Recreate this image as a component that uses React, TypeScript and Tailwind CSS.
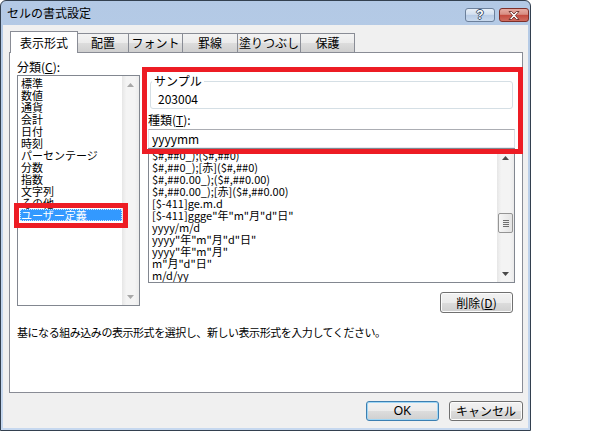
import React from "react";

const categories = [
  "標準",
  "数値",
  "通貨",
  "会計",
  "日付",
  "時刻",
  "パーセンテージ",
  "分数",
  "指数",
  "文字列",
  "その他",
  "ユーザー定義",
];

const formats = [
  '$#,##0_);($#,##0)',
  '$#,##0_);[赤]($#,##0)',
  '$#,##0.00_);($#,##0.00)',
  '$#,##0.00_);[赤]($#,##0.00)',
  '[$-411]ge.m.d',
  '[$-411]ggge"年"m"月"d"日"',
  'yyyy/m/d',
  'yyyy"年"m"月"d"日"',
  'yyyy"年"m"月"',
  'm"月"d"日"',
  'm/d/yy',
];

function Arrow({ up, color }: { up?: boolean; color: string }) {
  return (
    <div className="h-[17px] flex items-center justify-center shrink-0">
      <svg width="7" height="4" viewBox="0 0 7 4">
        {up ? <path d="M3.5 0L7 4H0z" fill={color} /> : <path d="M0 0h7L3.5 4z" fill={color} />}
      </svg>
    </div>
  );
}

function Track({ children }: { children: React.ReactNode }) {
  return (
    <div className="w-[17px] shrink-0 flex flex-col bg-[linear-gradient(90deg,#e6e6e6,#f4f4f4_25%,#f4f4f4_75%,#ebebeb)]">
      {children}
    </div>
  );
}

function Tab({ label, active, w }: { label: string; active?: boolean; w: string }) {
  if (active) {
    return (
      <div className={`${w} h-[22px] relative z-10 bg-white border border-b-0 border-[#898c95] flex items-center justify-center`}>
        {label}
      </div>
    );
  }
  return (
    <div
      className={`${w} h-[20px] border border-l-0 border-[#898c95] bg-[linear-gradient(#f3f3f3_0%,#ebebeb_50%,#dddddd_50%,#cfcfcf_100%)] flex items-center justify-center`}
    >
      {label}
    </div>
  );
}

function Button({ children, def, w }: { children: React.ReactNode; def?: boolean; w: string }) {
  return (
    <div
      className={`${w} h-[20px] rounded-[3px] border flex items-center justify-center bg-[linear-gradient(#f2f2f2_0%,#ebebeb_50%,#dddddd_50%,#cfcfcf_100%)] ${
        def ? "border-[#3c7fb1] shadow-[inset_0_0_0_1px_#9fd6f5]" : "border-[#707070] shadow-[inset_0_0_0_1px_#fcfcfc]"
      }`}
    >
      {children}
    </div>
  );
}

export default function App() {
  return (
    <div className="relative w-[600px] h-[431px] bg-white text-[12px] leading-[12px] text-black font-['Noto_Sans_CJK_JP','Liberation_Sans',sans-serif]">
      {/* window */}
      <div className="w-[531px] h-[431px] flex flex-col border border-[#33404f] rounded-t-[6px] bg-[linear-gradient(#b3c9e5,#c6d8ef)]">
        {/* title bar */}
        <div className="h-[24px] shrink-0 flex items-start">
          <div className="pl-[6px] pt-[6px] flex-1">セルの書式設定</div>
          <div className="mt-[7px] mr-[1px] flex gap-[4px]">
            <div className="w-[30px] h-[14px] rounded-[3px] border border-[#6c809b] bg-[linear-gradient(#e8eff8_0%,#d3e0f0_45%,#b7cbe5_50%,#c9daee_100%)] flex items-center justify-center">
              <span className="text-[12px] leading-[12px] font-bold text-white font-['Liberation_Sans',sans-serif] [text-shadow:1px_0_0_#3b4f6b,-1px_0_0_#3b4f6b,0_1px_0_#3b4f6b,0_-1px_0_#3b4f6b]">
                ?
              </span>
            </div>
            <div className="w-[30px] h-[14px] rounded-[3px] border border-[#7e302a] bg-[linear-gradient(#e6aba2_0%,#d88d82_45%,#c4493d_50%,#cf6c5f_100%)] flex items-center justify-center">
              <svg width="12" height="9" viewBox="0 0 12 9">
                <path
                  d="M1 0.5h2.6L6 3l2.4-2.5H11L7.4 4.5 11 8.5H8.4L6 6 3.6 8.5H1l3.6-4z"
                  fill="#fff"
                  stroke="#5a1f1a"
                  strokeWidth="0.8"
                />
              </svg>
            </div>
          </div>
        </div>

        {/* client */}
        <div className="flex-1 mx-[2px] mb-[2px] bg-[#f0f0f0] pl-[6px] pt-[6px] pb-[7px] flex flex-col">
          <div className="flex items-end h-[22px] pl-px">
            <Tab label="表示形式" active w="w-[68px]" />
            <Tab label="配置" w="w-[51px]" />
            <Tab label="フォント" w="w-[54px]" />
            <Tab label="罫線" w="w-[55px]" />
            <Tab label="塗りつぶし" w="w-[63px]" />
            <Tab label="保護" w="w-[54px]" />
          </div>

          {/* panel */}
          <div className="-mt-px w-[514px] h-[341px] border border-[#898c95] bg-white flex flex-col">
            <div className="flex">
              {/* left column */}
              <div className="ml-[7px] w-[123px] pt-[8px] flex flex-col">
                <div>
                  分類(<span className="underline">C</span>):
                </div>
                <div className="mt-[2px] h-[231px] border border-[#828790] flex">
                  <div className="flex-1 pt-px pl-[2px] text-[11px]">
                    {categories.map((c) => (
                      <div
                        key={c}
                        className={`h-[12px] pl-px whitespace-nowrap ${
                          c === "ユーザー定義" ? "bg-[#3399ff] text-white outline outline-dotted outline-[#cfe6ff] -outline-offset-1" : ""
                        }`}
                      >
                        {c}
                      </div>
                    ))}
                  </div>
                  <Track>
                    <Arrow up color="#a8a8a8" />
                    <div className="flex-1" />
                    <Arrow color="#a8a8a8" />
                  </Track>
                </div>
              </div>

              {/* right column */}
              <div className="ml-[8px] w-[367px] pt-[22px] flex flex-col">
                <fieldset className="mx-[2px] border border-[#d5dfe5] rounded-[3px] pl-[7px] pt-[6px] pb-[3px]">
                  <legend className="ml-[-6px] px-[2px]">サンプル</legend>
                  <div>203004</div>
                </fieldset>
                <div className="mt-[5px]">
                  種類(<span className="underline">T</span>):
                </div>
                <div className="mt-[3px] h-[19px] border border-[#abadb3] border-b-[#e3e9ef] border-r-[#dbdfe6] border-l-[#e2e3ea] flex items-center pl-[3px]">
                  yyyymm
                </div>
                <div className="h-[135px] border border-[#828790] flex">
                  <div className="flex-1 overflow-hidden pl-[3px] text-[11px]">
                    {formats.map((f) => (
                      <div key={f} className="h-[12px] whitespace-nowrap">
                        {f}
                      </div>
                    ))}
                  </div>
                  <Track>
                    <Arrow up color="#4a4a4a" />
                    <div className="h-[47px]" />
                    <div className="mx-px h-[20px] rounded-[2px] border border-[#959595] bg-[linear-gradient(90deg,#f6f6f6,#e4e4e4)] flex flex-col items-center justify-center gap-[1px]">
                      <div className="w-[6px] h-px bg-[#6f6f6f]" />
                      <div className="w-[6px] h-px bg-[#6f6f6f]" />
                      <div className="w-[6px] h-px bg-[#6f6f6f]" />
                      <div className="w-[6px] h-px bg-[#6f6f6f]" />
                    </div>
                    <div className="flex-1" />
                    <Arrow color="#4a4a4a" />
                  </Track>
                </div>
                <div className="mt-[9px] mr-[2px] flex justify-end">
                  <Button w="w-[73px] h-[21px]">
                    削除(<span className="underline">D</span>)
                  </Button>
                </div>
              </div>
            </div>
            <div className="mt-[13px] pl-[7px] text-[11px] tracking-[-0.45px] whitespace-nowrap">
              基になる組み込みの表示形式を選択し、新しい表示形式を入力してください。
            </div>
          </div>

          {/* bottom buttons */}
          <div className="mt-[8px] w-[514px] flex justify-end gap-[10px]">
            <Button def w="w-[73px]">
              <span className="font-['Liberation_Sans',sans-serif]">OK</span>
            </Button>
            <Button w="w-[74px]">キャンセル</Button>
          </div>
        </div>
      </div>

      {/* red annotation boxes */}
      <div className="absolute left-[142px] top-[67px] w-[381px] h-[87px] border-[5px] border-[#ed1c24]" />
      <div className="absolute left-[14px] top-[203px] w-[114px] h-[25px] border-[5px] border-[#ed1c24]" />
    </div>
  );
}
